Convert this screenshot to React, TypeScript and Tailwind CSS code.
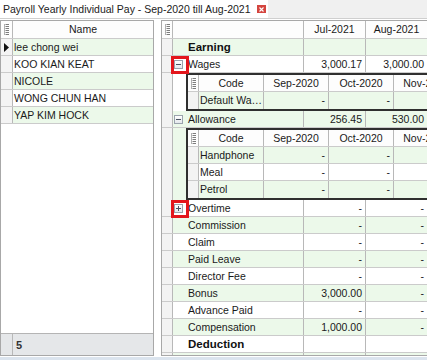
import React from "react";

const GREEN = "bg-[#ecf9ea]";
const LINE = "border-[#cbcbcb]";
const VLINE = "border-[#b8b8b8]";

function Grip() {
  return (
    <svg width="5" height="11" viewBox="0 0 5 11" className="block">
      <rect x="0" y="0" width="1" height="11" fill="#b0b0b0" />
      {[0, 2, 4, 6, 8, 10].map((y) => (
        <rect key={y} x="1.5" y={y} width="3.5" height="1" fill="#7d7d7d" />
      ))}
    </svg>
  );
}

function Tri() {
  return (
    <svg width="5" height="9" viewBox="0 0 5 9" className="block">
      <path d="M0 0 L5 4.5 L0 9 Z" fill="#111" />
    </svg>
  );
}

function CloseIcon() {
  return (
    <span className="flex h-[8px] w-[9px] items-center justify-center bg-[#d4453f]">
      <svg width="5" height="5" viewBox="0 0 5 5" className="block">
        <path d="M0.5 0.5 L4.5 4.5 M4.5 0.5 L0.5 4.5" stroke="#fff" strokeWidth="1.1" />
      </svg>
    </span>
  );
}

function ExpandBox({ plus }: { plus?: boolean }) {
  return (
    <span className="relative block h-[9px] w-[9px] border border-[#9aa3ad] bg-gradient-to-b from-white to-[#e4e8ec]">
      <span className="absolute left-[1px] top-[3px] h-[1px] w-[5px] bg-[#4b5563]" />
      {plus && <span className="absolute left-[3px] top-[1px] h-[5px] w-[1px] bg-[#4b5563]" />}
    </span>
  );
}

type TRowProps = {
  label: string;
  bold?: boolean;
  jul?: string;
  aug?: string;
  green?: boolean;
  expand?: "plus" | "minus";
  red?: boolean;
};

function TRow({ label, bold, jul = "", aug = "", green, expand, red }: TRowProps) {
  return (
    <div className={`flex h-[17px] shrink-0 border-b ${LINE} ${green ? GREEN : "bg-white"}`}>
      <div className={`w-[11px] shrink-0 border-r ${VLINE} bg-[#f3f3f3]`} />
      <div className={`flex w-[131px] shrink-0 items-center border-r ${VLINE}`}>
        <div className="relative flex h-full w-[15px] shrink-0 items-center pl-[1px]">
          {expand && <ExpandBox plus={expand === "plus"} />}
          {red && (
            <span className="absolute left-[-2px] top-[0px] z-10 h-[18px] w-[18px] border-[3px] border-[#e3161c]" />
          )}
        </div>
        <span className={bold ? "text-[11.5px] font-bold text-[#111]" : ""}>{label}</span>
      </div>
      <div className={`w-[62px] shrink-0 border-r ${VLINE} pr-[3px] text-right`}>{jul}</div>
      <div className={`w-[62px] shrink-0 border-r ${VLINE} pr-[3px] text-right`}>{aug}</div>
      <div className="flex-1" />
    </div>
  );
}

function Detail({ green, rows }: { green?: boolean; rows: string[] }) {
  return (
    <div className={`flex shrink-0 ${green ? GREEN : "bg-white"}`}>
      <div className={`w-[11px] shrink-0 border-r ${VLINE} bg-[#f3f3f3]`} />
      <div className="w-[13px] shrink-0" />
      <div className="min-w-0 flex-1 overflow-hidden border-y-2 border-l-2 border-[#2f2f2f] bg-white">
        <div className={`flex h-[17px] border-b ${LINE} bg-[#fdfdfd]`}>
          <div className={`flex w-[11px] shrink-0 items-center justify-center border-r ${VLINE}`}>
            <Grip />
          </div>
          <div className={`w-[65px] shrink-0 border-r ${VLINE} text-center`}>Code</div>
          <div className={`w-[65px] shrink-0 border-r ${VLINE} text-center`}>Sep-2020</div>
          <div className={`w-[65px] shrink-0 border-r ${VLINE} text-center`}>Oct-2020</div>
          <div className={`w-[65px] shrink-0 border-r ${VLINE} text-center`}>Nov-2020</div>
        </div>
        {rows.map((r, i) => (
          <div
            key={r}
            className={`flex h-[17px] ${i < rows.length - 1 ? `border-b ${LINE}` : ""} ${i % 2 === 0 ? GREEN : "bg-white"}`}
          >
            <div className={`w-[11px] shrink-0 border-r ${VLINE} bg-[#f3f3f3]`} />
            <div className={`w-[65px] shrink-0 overflow-hidden text-ellipsis whitespace-nowrap border-r ${VLINE} pl-[1px]`}>
              {r}
            </div>
            <div className={`w-[65px] shrink-0 border-r ${VLINE} pr-[3px] text-right`}>-</div>
            <div className={`w-[65px] shrink-0 border-r ${VLINE} pr-[3px] text-right`}>-</div>
            <div className={`w-[65px] shrink-0 border-r ${VLINE} pr-[3px] text-right`}>-</div>
          </div>
        ))}
      </div>
    </div>
  );
}

const names = ["lee chong wei", "KOO KIAN KEAT", "NICOLE", "WONG CHUN HAN", "YAP KIM HOCK"];

export default function App() {
  return (
    <div className="flex h-[360px] w-[427px] flex-col overflow-hidden bg-white font-['Liberation_Sans',Arial,sans-serif] text-[10.5px] leading-[16px] text-[#1a1a1a]">
      {/* tab strip */}
      <div className="flex h-[19px] shrink-0 border-b border-[#cfcfcf] bg-[#f0f0f0]">
        <div className="flex w-[268px] items-center bg-white pl-[3px] text-[#222]">
          <span className="whitespace-nowrap">Payroll Yearly Individual Pay - Sep-2020 till Aug-2021</span>
          <span className="ml-[6px]">
            <CloseIcon />
          </span>
        </div>
      </div>

      <div className="mt-[1px] flex h-[336px] shrink-0">
        {/* left panel */}
        <div className="flex w-[154px] shrink-0 flex-col border border-[#a8a8a8]">
          <div className={`flex h-[18px] shrink-0 border-b ${LINE} bg-[#fdfdfd]`}>
            <div className={`flex w-[12px] shrink-0 items-center justify-center border-r ${VLINE}`}>
              <Grip />
            </div>
            <div className="flex-1 text-center">Name</div>
          </div>
          {names.map((n, i) => (
            <div key={n} className={`flex h-[17px] shrink-0 border-b ${LINE}`}>
              <div className={`flex w-[12px] shrink-0 items-center justify-center border-r ${VLINE} bg-[#f4f4f4]`}>
                {i === 0 && <Tri />}
              </div>
              <div className={`flex-1 pl-[1px] ${i % 2 === 0 ? GREEN : "bg-white"}`}>{n}</div>
            </div>
          ))}
          <div className="flex-1" />
          <div className="flex h-[22px] shrink-0 border-t border-[#b4b4b4] bg-[#e5e7e9]">
            <div className={`w-[12px] shrink-0 border-r ${VLINE}`} />
            <div className="flex items-center pl-[3px] text-[11px] font-bold text-[#333]">5</div>
          </div>
        </div>

        <div className="w-[7px] shrink-0" />

        {/* right panel */}
        <div className="flex min-w-0 flex-1 flex-col overflow-hidden border-y border-l border-[#a8a8a8]">
          <div className={`flex h-[18px] shrink-0 border-b ${LINE} bg-[#fdfdfd]`}>
            <div className={`flex w-[11px] shrink-0 items-center justify-center border-r ${VLINE}`}>
              <Grip />
            </div>
            <div className={`w-[131px] shrink-0 border-r ${VLINE}`} />
            <div className={`w-[62px] shrink-0 border-r ${VLINE} text-center`}>Jul-2021</div>
            <div className={`w-[62px] shrink-0 border-r ${VLINE} text-center`}>Aug-2021</div>
            <div className="flex-1" />
          </div>
          <TRow label="Earning" bold green />
          <TRow label="Wages" expand="minus" red jul="3,000.17" aug="3,000.00" />
          <Detail rows={["Default Wages"]} />
          <TRow label="Allowance" expand="minus" green jul="256.45" aug="530.00" />
          <Detail green rows={["Handphone", "Meal", "Petrol"]} />
          <TRow label="Overtime" expand="plus" red jul="-" aug="-" />
          <TRow label="Commission" green jul="-" aug="-" />
          <TRow label="Claim" jul="-" aug="-" />
          <TRow label="Paid Leave" green jul="-" aug="-" />
          <TRow label="Director Fee" jul="-" aug="-" />
          <TRow label="Bonus" green jul="3,000.00" aug="-" />
          <TRow label="Advance Paid" jul="-" aug="-" />
          <TRow label="Compensation" green jul="1,000.00" aug="-" />
          <TRow label="Deduction" bold />
          <TRow label="" green />
        </div>
      </div>

      <div className="mt-[1px] h-[3px] shrink-0 bg-[#dbe4ee]" />
    </div>
  );
}
